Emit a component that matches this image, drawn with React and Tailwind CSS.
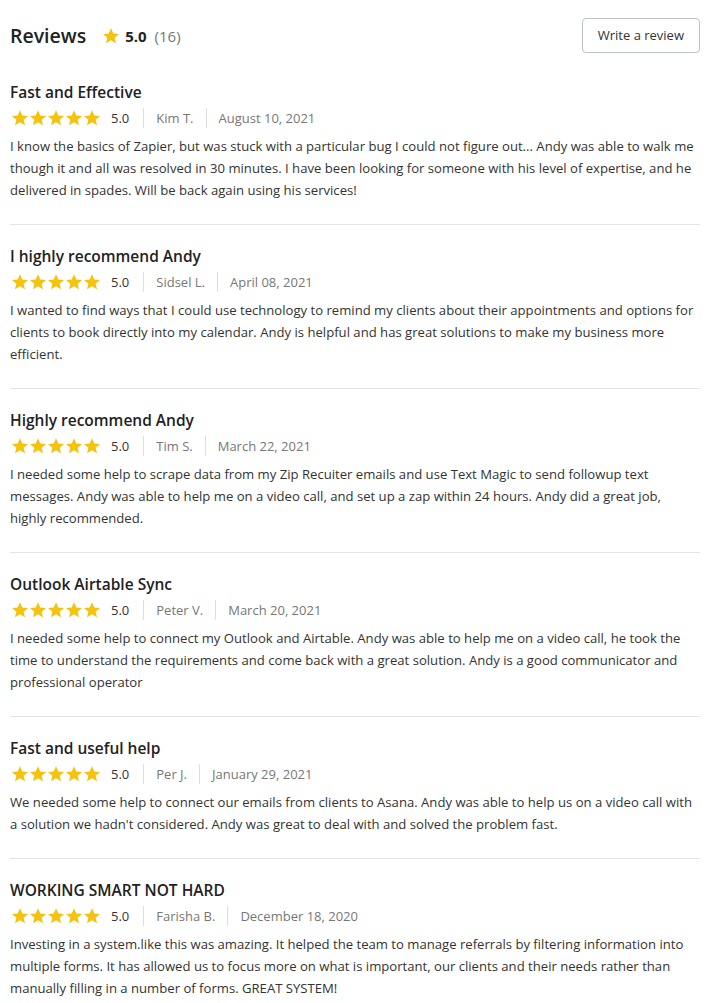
const reviews = [
  {
    title: "Fast and Effective",
    name: "Kim T.",
    date: "August 10, 2021",
    body: "I know the basics of Zapier, but was stuck with a particular bug I could not figure out... Andy was able to walk me though it and all was resolved in 30 minutes. I have been looking for someone with his level of expertise, and he delivered in spades. Will be back again using his services!",
  },
  {
    title: "I highly recommend Andy",
    name: "Sidsel L.",
    date: "April 08, 2021",
    body: "I wanted to find ways that I could use technology to remind my clients about their appointments and options for clients to book directly into my calendar. Andy is helpful and has great solutions to make my business more efficient.",
  },
  {
    title: "Highly recommend Andy",
    name: "Tim S.",
    date: "March 22, 2021",
    body: "I needed some help to scrape data from my Zip Recuiter emails and use Text Magic to send followup text messages. Andy was able to help me on a video call, and set up a zap within 24 hours. Andy did a great job, highly recommended.",
  },
  {
    title: "Outlook Airtable Sync",
    name: "Peter V.",
    date: "March 20, 2021",
    body: "I needed some help to connect my Outlook and Airtable. Andy was able to help me on a video call, he took the time to understand the requirements and come back with a great solution. Andy is a good communicator and professional operator",
  },
  {
    title: "Fast and useful help",
    name: "Per J.",
    date: "January 29, 2021",
    body: "We needed some help to connect our emails from clients to Asana. Andy was able to help us on a video call with a solution we hadn't considered. Andy was great to deal with and solved the problem fast.",
  },
  {
    title: "WORKING SMART NOT HARD",
    name: "Farisha B.",
    date: "December 18, 2020",
    body: "Investing in a system.like this was amazing. It helped the team to manage referrals by filtering information into multiple forms. It has allowed us to focus more on what is important, our clients and their needs rather than manually filling in a number of forms. GREAT SYSTEM!",
  },
];

function Star({ className }) {
  return (
    <svg viewBox="1.3 1.3 21.4 21.4" className={className} fill="#f4c20f">
      <path d="M12 1.6l3.1 7 7.6.7-5.8 5 1.8 7.5L12 17.8l-6.7 4 1.8-7.5-5.8-5 7.6-.7z" />
    </svg>
  );
}

function Review({ review, last }) {
  return (
    <article
      className={
        last
          ? "pt-5 pb-[23px]"
          : "pt-5 pb-[23px] border-b border-[#e4e4e4]"
      }
    >
      <h3 className="text-[15.5px] leading-[22px] font-semibold text-[#222]">
        {review.title}
      </h3>

      <div className="mt-[5px] flex items-center h-5 text-[13px] leading-5">
        <div className="flex items-center gap-[2px] ml-[2px]">
          <Star className="w-4 h-4" />
          <Star className="w-4 h-4" />
          <Star className="w-4 h-4" />
          <Star className="w-4 h-4" />
          <Star className="w-4 h-4" />
        </div>
        <span className="ml-[11px] text-[#333]">5.0</span>
        <span className="ml-[14px] mr-3 w-px h-5 bg-[#dedede]" />
        <span className="text-[#777]">{review.name}</span>
        <span className="ml-3 mr-3 w-px h-5 bg-[#dedede]" />
        <span className="text-[#777]">{review.date}</span>
      </div>

      <p className="mt-[7px] text-[13.12px] leading-[22px] text-[#333]">
        {review.body}
      </p>
    </article>
  );
}

export default function App() {
  return (
    <div
      className="bg-white min-h-screen px-[10px] pt-[18px]"
      style={{ fontFamily: "'Open Sans', sans-serif" }}
    >
      <div className="w-[690px]">
        {/* Header */}
        <div className="flex items-center justify-between h-[35px]">
          <div className="flex items-center pt-[1px]">
            <h2 className="text-[19.5px] font-semibold text-[#222] leading-none">
              Reviews
            </h2>
            <Star className="ml-[17px] w-4 h-4" />
            <span className="ml-[6px] text-[15px] font-bold text-[#222]">
              5.0
            </span>
            <span className="ml-[8px] text-[15px] text-[#777]">(16)</span>
          </div>

          <button
            type="button"
            className="h-[35px] px-[15px] rounded-[4px] border border-[#bcc0c7] text-[13px] text-[#333] bg-white"
          >
            Write a review
          </button>
        </div>

        {/* Reviews list */}
        <div className="mt-[8px]">
          {reviews.map((r, i) => (
            <Review key={r.title} review={r} last={i === reviews.length - 1} />
          ))}
        </div>
      </div>
    </div>
  );
}
